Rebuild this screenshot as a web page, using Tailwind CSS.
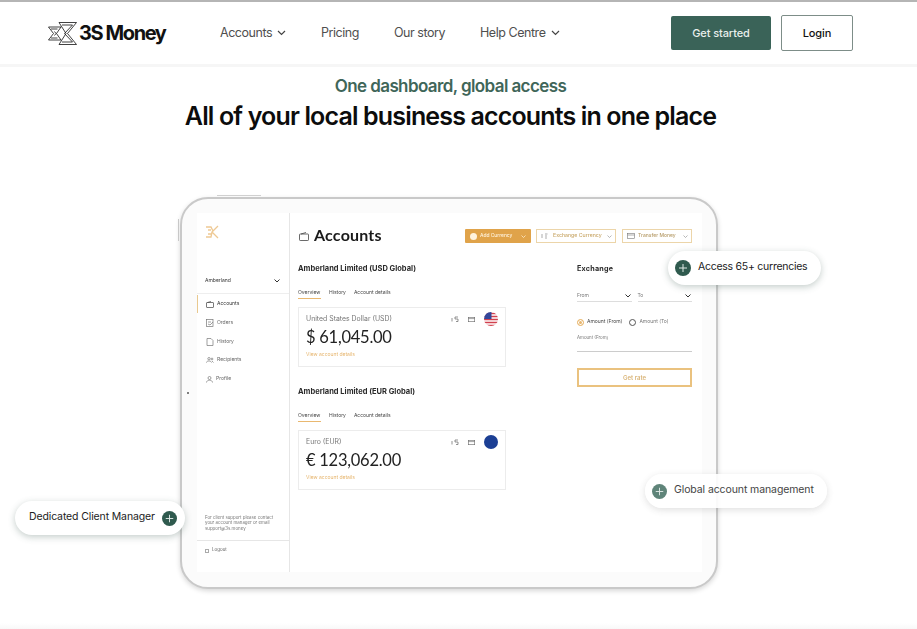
<!DOCTYPE html>
<html lang="en">
<head>
    <meta charset="UTF-8">
    <title>3S Money - Accounts</title>
    <script src="https://cdn.jsdelivr.net/npm/@tailwindcss/browser@4"></script>
</head>
<body class="bg-white font-['Inter','Liberation_Sans',sans-serif] text-[#111] w-[917px] h-[629px] overflow-hidden relative">
    <!-- Top nav -->
    <header class="h-[67px] border-t-2 border-t-[#b5b5b5] border-b-[3px] border-b-[#f6f6f6] pl-[48px] flex items-center">
        <a class="flex items-center w-[172px] h-[30px]" href="#">
            <svg class="w-[29px] h-[23px] shrink-0" viewBox="0 0 29 23" fill="none" stroke="#111" stroke-width="0.8" stroke-linejoin="miter">
                <path d="M0.5 5H13L8.5 11.5L13 18H0.5L5.5 11.5Z"/>
                <path d="M3 7H9.5M3 16H9.5M6.5 9.5L8 11.5L6.5 13.5"/>
                <path d="M11 0.5H28.5L19.5 11.5L28.5 22.5H11L18 11.5Z"/>
                <path d="M14 3H24.5L16.5 11.5L24.5 20H14"/>
            </svg>
            <span class="ml-[2px] text-[20px] leading-none font-bold tracking-[-1.4px] whitespace-nowrap">3S Money</span>
        </a>
        <nav class="flex items-center text-[12.5px] text-[#4f4f4f] tracking-[-0.45px]">
            <a href="#" class="flex items-center w-[101px]">Accounts
                <svg class="w-[9px] h-[6px] ml-[5px] shrink-0" viewBox="0 0 9 6" fill="none" stroke="#444" stroke-width="1.2"><path d="M1 1l3.5 3.5L8 1"/></svg>
            </a>
            <a href="#" class="w-[73px]">Pricing</a>
            <a href="#" class="w-[86px]">Our story</a>
            <a href="#" class="flex items-center w-[78px] whitespace-nowrap">Help Centre
                <svg class="w-[9px] h-[6px] ml-[5px] shrink-0" viewBox="0 0 9 6" fill="none" stroke="#444" stroke-width="1.2"><path d="M1 1l3.5 3.5L8 1"/></svg>
            </a>
        </nav>
        <div class="ml-[113px] flex items-center gap-[10px] text-[11px] font-medium tracking-[-0.1px]">
            <a href="#" class="w-[100px] h-[34px] bg-[#3a6358] rounded-[2px] text-[#e8efec] flex items-center justify-center">Get started</a>
            <a href="#" class="w-[72px] h-[36px] border border-[#7d8d88] rounded-[2px] flex items-center justify-center">Login</a>
        </div>
    </header>

    <!-- Headline -->
    <section class="text-center pr-[16px]">
        <p class="mt-[8px] h-[22px] leading-[22px] text-[17px] font-semibold text-[#3f6659] tracking-[-0.6px]">One dashboard, global access</p>
        <h1 class="mt-[2px] h-[34px] leading-[34px] text-[25px] font-semibold text-[#0c0c0c] tracking-[-0.85px]">All of your local business accounts in one place</h1>
    </section>

    <!-- Tablet mockup -->
    <div class="relative w-[538px] h-[392px] ml-[180px] mt-[64px]">
        <span class="absolute left-[37px] -top-[2px] w-[44px] h-[1px] bg-[#d0d0d0]"></span>
        <span class="absolute -left-[2px] top-[22px] w-[1px] h-[22px] bg-[#c8c8c8]"></span>
        <span class="absolute left-[7px] top-[195px] w-[2px] h-[2px] rounded-full bg-[#555]"></span>
        <div class="w-full h-full border-2 border-[#c9c9c9] rounded-[28px] bg-[#fbfbfb] shadow-[0_2px_5px_rgba(0,0,0,0.16)] pl-[15px] pt-[14px]">
            <div class="w-[505px] h-[359px] bg-white flex text-[#333] blur-[0.25px]">
                <!-- Sidebar -->
                <aside class="w-[93px] shrink-0 border-r border-[#e6e6e6] flex flex-col text-[5px] text-[#666]">
                    <svg class="w-[14px] h-[14px] ml-[8px] mt-[12px]" viewBox="0 0 14 14" fill="none" stroke="#eec994" stroke-width="1.3">
                        <path d="M1 2h5l2 4M13 1L7 7l6 6M1 12h5l1-5M3 5h3M3 9h3"/>
                    </svg>
                    <div class="mt-[36px] mx-[8px] h-[12px] flex items-center justify-between text-[#333]">
                        <span>Amberland</span>
                        <svg class="w-[6px] h-[4px] mr-[1px]" viewBox="0 0 6 4" fill="none" stroke="#333" stroke-width="1"><path d="M0.5 0.5L3 3l2.5-2.5"/></svg>
                    </div>
                    <div class="mt-[6px] border-t border-[#eee]"></div>
                    <div class="mt-[1px] h-[18px] border-l border-[#e9c98f] pl-[8px] flex items-center gap-[3px] text-[#333]">
                        <svg class="w-[8px] h-[7px]" viewBox="0 0 8 7" fill="none" stroke="#444" stroke-width="0.7"><rect x="0.5" y="1.5" width="7" height="5" rx="0.5"/><path d="M1.5 1.5L5 0.5"/></svg>
                        <span>Accounts</span>
                    </div>
                    <div class="mt-[1px] h-[18px] pl-[9px] flex items-center gap-[3px]">
                        <svg class="w-[8px] h-[8px]" viewBox="0 0 8 8" fill="none" stroke="#777" stroke-width="0.7"><rect x="0.5" y="0.5" width="6.5" height="7"/><path d="M2 3h3M2 5l2 1 3-3"/></svg>
                        <span>Orders</span>
                    </div>
                    <div class="mt-[1px] h-[18px] pl-[9px] flex items-center gap-[3px]">
                        <svg class="w-[8px] h-[8px]" viewBox="0 0 8 8" fill="none" stroke="#777" stroke-width="0.7"><path d="M1 0.5h4l2 2v5H1z"/></svg>
                        <span>History</span>
                    </div>
                    <div class="h-[18px] pl-[9px] flex items-center gap-[3px]">
                        <svg class="w-[8px] h-[6px]" viewBox="0 0 8 6" fill="none" stroke="#777" stroke-width="0.7"><circle cx="3" cy="1.7" r="1.2"/><circle cx="6" cy="2" r="0.9"/><path d="M0.5 5.5c0-2 4.5-2 5 0M6 4l1.5 1.5"/></svg>
                        <span>Recipients</span>
                    </div>
                    <div class="mt-[1px] h-[18px] pl-[9px] flex items-center gap-[3px]">
                        <svg class="w-[7px] h-[7px]" viewBox="0 0 7 7" fill="none" stroke="#777" stroke-width="0.7"><circle cx="3.5" cy="2" r="1.5"/><path d="M0.5 6.5c0-3 6-3 6 0"/></svg>
                        <span>Profile</span>
                    </div>
                    <p class="mt-auto mx-[8px] mb-[9px] leading-[5.4px] text-[4.4px] text-[#777]">For client support please contact your account manager or email support@3s.money</p>
                    <div class="h-[32px] border-t border-[#e6e6e6] pl-[8px] pb-[12px] flex items-center gap-[3px] text-[4.5px]">
                        <span class="w-[4px] h-[4px] border-[0.5px] border-[#aaa]"></span>
                        <span>Logout</span>
                    </div>
                </aside>

                <!-- Main panel -->
                <main class="flex-1 min-w-0 pl-[9px] pr-[10px]">
                    <div class="mt-[16px] h-[14px] flex items-center">
                        <svg class="w-[10px] h-[9px] shrink-0" viewBox="0 0 10 9" fill="none" stroke="#444" stroke-width="0.8"><rect x="0.5" y="2" width="9" height="6.5" rx="0.7"/><path d="M2 2L7 0.5"/></svg>
                        <span class="ml-[5px] pb-[2px] text-[16px] font-bold text-[#1a1a1a] font-['Lato','Inter',sans-serif] tracking-[0.2px]">Accounts</span>
                        <div class="ml-auto flex items-center text-[5px] font-medium">
                            <span class="w-[66px] h-[14px] bg-[#e0a34a] rounded-[1px] text-[#fff3de] flex items-center pl-[5px] gap-[3px] whitespace-nowrap">
                                <span class="w-[7px] h-[7px] rounded-full bg-[#fff3de] shrink-0"></span><span class="text-[4.9px]">Add Currency</span>
                                <svg class="w-[5px] h-[3px] ml-auto mr-[5px] shrink-0" viewBox="0 0 5 3" fill="none" stroke="#fff3de" stroke-width="0.7"><path d="M0.5 0.5L2.5 2.5l2-2"/></svg>
                            </span>
                            <span class="ml-[5px] w-[80px] h-[14px] border border-[#ecd5a9] text-[#c9a86a] flex items-center pl-[4px] gap-[5px] whitespace-nowrap">
                                <svg class="w-[7px] h-[6px] shrink-0" viewBox="0 0 7 6" fill="none" stroke="#777" stroke-width="0.6"><path d="M1 1v4M4 1h2.5M4 3h2M4 5h2"/></svg><span class="text-[5.2px]">Exchange Currency</span>
                                <svg class="w-[5px] h-[3px] ml-auto mr-[3px] shrink-0" viewBox="0 0 5 3" fill="none" stroke="#999" stroke-width="0.7"><path d="M0.5 0.5L2.5 2.5l2-2"/></svg>
                            </span>
                            <span class="ml-[6px] w-[70px] h-[14px] border border-[#ecd5a9] text-[#b59a66] flex items-center pl-[4px] gap-[3px] whitespace-nowrap">
                                <svg class="w-[8px] h-[6px] shrink-0" viewBox="0 0 8 6" fill="none" stroke="#777" stroke-width="0.6"><rect x="0.5" y="0.5" width="7" height="5"/><path d="M0.5 2h7"/></svg><span>Transfer Money</span>
                                <svg class="w-[5px] h-[3px] ml-auto mr-[3px] shrink-0" viewBox="0 0 5 3" fill="none" stroke="#999" stroke-width="0.7"><path d="M0.5 0.5L2.5 2.5l2-2"/></svg>
                            </span>
                        </div>
                    </div>
                    <div class="mt-[20px] flex justify-between">
                        <!-- Account lists -->
                        <div class="w-[208px] -ml-[1px]">
                            <h3 class="h-[10px] leading-[12px] text-[7.5px] font-bold text-[#2a2a2a] whitespace-nowrap">Amberland Limited (USD Global)</h3>
                            <div class="mt-[14px] flex gap-[8px] text-[5px] text-[#444] h-[12px]">
                                <span class="w-[23px] h-[12px] leading-[10px] border-b border-[#e9b870]">Overview</span>
                                <span class="leading-[10px]">History</span>
                                <span class="leading-[10px]">Account details</span>
                            </div>
                            <div class="mt-[8px] h-[60px] border border-[#ececec] pl-[7px] pr-[7px] pt-[6px] relative">
                                <p class="text-[6.9px] leading-[9px] text-[#777]">United States Dollar (USD)</p>
                                <p class="mt-[4px] text-[16.5px] leading-[20px] text-[#222] font-['Lato','Inter',sans-serif] tracking-[-0.25px]">$ 61,045.00</p>
                                <p class="mt-[4px] text-[5px] leading-[6px] text-[#e6b56e]">View account details</p>
                                <div class="absolute right-[7px] top-[4px] flex items-center">
                                    <svg class="w-[8px] h-[6px] mr-[9px]" viewBox="0 0 8 6" fill="none" stroke="#666" stroke-width="0.7"><path d="M1 2v3.5M4 1h3M4 1v2h3v2.5H5"/></svg>
                                    <svg class="w-[7px] h-[5px] mr-[9px]" viewBox="0 0 7 5" fill="none" stroke="#666" stroke-width="0.6"><rect x="0.3" y="0.3" width="6.4" height="4.4"/><path d="M0.3 1.6h6.4"/></svg>
                                    <svg class="w-[14px] h-[14px]" viewBox="0 0 14 14"><clipPath id="usd"><circle cx="7" cy="7" r="7"/></clipPath><g clip-path="url(#usd)"><rect width="14" height="14" fill="#fff"/><path d="M0 1.5h14M0 4.5h14M0 7.5h14M0 10.5h14M0 13.5h14" stroke="#d1404e" stroke-width="1.5"/><rect width="7.5" height="7" fill="#33479a"/></g></svg>
                                </div>
                            </div>
                            <h3 class="mt-[19px] h-[10px] leading-[12px] text-[7.5px] font-bold text-[#2a2a2a] whitespace-nowrap">Amberland Limited (EUR Global)</h3>
                            <div class="mt-[14px] flex gap-[8px] text-[5px] text-[#444] h-[12px]">
                                <span class="w-[23px] h-[12px] leading-[10px] border-b border-[#e9b870]">Overview</span>
                                <span class="leading-[10px]">History</span>
                                <span class="leading-[10px]">Account details</span>
                            </div>
                            <div class="mt-[8px] h-[60px] border border-[#ececec] pl-[7px] pr-[7px] pt-[6px] relative">
                                <p class="text-[6.9px] leading-[9px] text-[#777]">Euro (EUR)</p>
                                <p class="mt-[4px] text-[16.5px] leading-[20px] text-[#222] font-['Lato','Inter',sans-serif] tracking-[-0.25px]">€ 123,062.00</p>
                                <p class="mt-[4px] text-[5px] leading-[6px] text-[#e6b56e]">View account details</p>
                                <div class="absolute right-[7px] top-[4px] flex items-center">
                                    <svg class="w-[8px] h-[6px] mr-[9px]" viewBox="0 0 8 6" fill="none" stroke="#666" stroke-width="0.7"><path d="M1 2v3.5M4 1h3M4 1v2h3v2.5H5"/></svg>
                                    <svg class="w-[7px] h-[5px] mr-[9px]" viewBox="0 0 7 5" fill="none" stroke="#666" stroke-width="0.6"><rect x="0.3" y="0.3" width="6.4" height="4.4"/><path d="M0.3 1.6h6.4"/></svg>
                                    <span class="w-[14px] h-[14px] rounded-full bg-[#1c3f94]"></span>
                                </div>
                            </div>
                        </div>

                        <!-- Exchange form -->
                        <div class="w-[115px] text-[5px] text-[#777]">
                            <h3 class="h-[10px] leading-[12px] text-[7.2px] font-bold text-[#2a2a2a] tracking-[0.2px]">Exchange</h3>
                            <div class="mt-[17px] flex gap-[6px]">
                                <div class="flex-1 h-[12px] pt-[2px] border-b border-[#ddd] flex items-start justify-between pr-[1px]">
                                    <span>From</span>
                                    <svg class="w-[6px] h-[4px] mt-[2px]" viewBox="0 0 6 4" fill="none" stroke="#333" stroke-width="1"><path d="M0.5 0.5L3 3l2.5-2.5"/></svg>
                                </div>
                                <div class="flex-1 h-[12px] pt-[2px] border-b border-[#ddd] flex items-start justify-between pr-[1px]">
                                    <span>To</span>
                                    <svg class="w-[6px] h-[4px] mt-[2px]" viewBox="0 0 6 4" fill="none" stroke="#333" stroke-width="1"><path d="M0.5 0.5L3 3l2.5-2.5"/></svg>
                                </div>
                            </div>
                            <div class="mt-[16px] h-[8px] flex items-center whitespace-nowrap">
                                <span class="w-[7px] h-[7px] rounded-full border border-[#e9b870] bg-[#e6b56e] shadow-[inset_0_0_0_1px_white]"></span>
                                <span class="ml-[3px] text-[#444]">Amount (From)</span>
                                <span class="ml-[7px] w-[7px] h-[7px] rounded-full border border-[#555]"></span>
                                <span class="ml-[3px]">Amount (To)</span>
                            </div>
                            <p class="mt-[9px] h-[6px] leading-[6px] text-[4.4px]">Amount (From)</p>
                            <div class="mt-[10px] border-b border-[#ccc]"></div>
                            <div class="mt-[16px] h-[19px] border-2 border-[#eac27f] flex items-center justify-center text-[6px] font-semibold text-[#d9b477]">Get rate</div>
                        </div>
                    </div>
                </main>
            </div>
        </div>

        <!-- Floating pills -->
        <div class="absolute left-[488px] top-[54px] w-[153px] h-[34px] rounded-full bg-white shadow-[0_2px_7px_rgba(60,90,80,0.3)] flex items-center pl-[7px] text-[10.5px] text-[#222] tracking-[-0.26px] whitespace-nowrap">
            <svg class="w-[16px] h-[16px] shrink-0" viewBox="0 0 16 16"><circle cx="8" cy="8" r="8" fill="#2f5a4e"/><path d="M8 4v8M4 8h8" stroke="#dfe9e5" stroke-width="1"/></svg>
            <span class="ml-[7px] pb-[2px]">Access 65+ currencies</span>
        </div>
        <div class="absolute -left-[165px] top-[304px] w-[170px] h-[34px] rounded-full bg-white shadow-[0_2px_7px_rgba(60,90,80,0.3)] flex items-center pl-[14px] text-[10.5px] text-[#222] tracking-[-0.13px] whitespace-nowrap">
            <span class="pb-[2px]">Dedicated Client Manager</span>
            <svg class="w-[15px] h-[15px] shrink-0 ml-[7px]" viewBox="0 0 16 16"><circle cx="8" cy="8" r="8" fill="#2f5a4e"/><path d="M8 4v8M4 8h8" stroke="#dfe9e5" stroke-width="1"/></svg>
        </div>
        <div class="absolute left-[465px] top-[277px] w-[182px] h-[34px] rounded-full bg-white/90 shadow-[0_2px_7px_rgba(60,60,60,0.16)] flex items-center pl-[7px] text-[10.5px] text-[#444] tracking-[-0.1px] whitespace-nowrap">
            <svg class="w-[15px] h-[15px] shrink-0" viewBox="0 0 16 16"><circle cx="8" cy="8" r="8" fill="#5f8479"/><path d="M8 4v8M4 8h8" stroke="#dfe9e5" stroke-width="1"/></svg>
            <span class="ml-[7px] pb-[2px]">Global account management</span>
        </div>
    </div>
    <div class="absolute left-0 right-0 bottom-0 h-[6px] bg-gradient-to-b from-white to-[#f8f8f8]"></div>
</body>
</html>
